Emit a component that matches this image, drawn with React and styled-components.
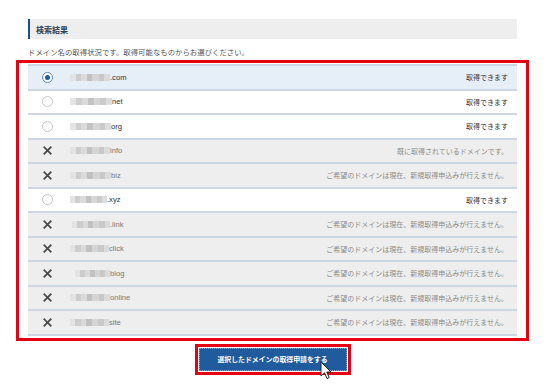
import React from "react";
import styled, { createGlobalStyle } from "styled-components";

const Global = createGlobalStyle`
  html, body { margin: 0; padding: 0; background: #fff; }
  body { font-family: "Noto Sans CJK JP", "Liberation Sans", sans-serif; }
`;

const Page = styled.div`
  width: 550px;
  height: 389px;
  padding: 19px 33px 0 28px;
  box-sizing: border-box;
  position: relative;
`;

const Heading = styled.div`
  height: 20px;
  background: #eeeeee;
  border-left: 2px solid #1d4f8c;
  display: flex;
  align-items: center;
  padding-left: 6px;
  font-size: 8px;
  font-weight: bold;
  color: #2c3e55;
`;

const Lead = styled.p`
  margin: 0;
  height: 21px;
  display: flex;
  align-items: center;
  padding-top: 4px;
  box-sizing: border-box;
  font-size: 7.4px;
  color: #555;
`;

const Highlight = styled.div`
  border: 3px solid #e50012;
  margin: 0 -12px;
  padding: 1px 9px 2px;
`;

const Table = styled.div`
  display: flex;
  flex-direction: column;
  border-top: 2px solid #cdd6e2;
`;

const bg = { selected: "#e6eef8", ok: "#ffffff", ng: "#eeeeee" };

const Row = styled.div`
  height: 22.5px;
  border-bottom: 2px solid #cdd6e2;
  background: ${(p) => bg[p.$state]};
  display: grid;
  grid-template-columns: 38px 1fr auto;
  align-items: center;
  padding-right: 9px;
`;

const IconCell = styled.div`
  display: flex;
  justify-content: center;
`;

const Radio = styled.span`
  width: 9px;
  height: 9px;
  border-radius: 50%;
  border: 1px solid ${(p) => (p.$checked ? "#5a86b8" : "#c3c8ce")};
  background: #fff;
  display: flex;
  align-items: center;
  justify-content: center;
  &::after {
    content: "";
    width: 5px;
    height: 5px;
    border-radius: 50%;
    background: ${(p) => (p.$checked ? "#1f5aa0" : "transparent")};
  }
`;

const Domain = styled.div`
  display: flex;
  align-items: center;
  font-family: "Liberation Sans", Arial, sans-serif;
  font-size: 7.6px;
  color: ${(p) => (p.$ng ? "#777" : "#333")};
  padding-left: 4px;
`;

const Masked = styled.span`
  display: inline-block;
  width: ${(p) => p.$w}px;
  height: 7px;
  margin-left: ${(p) => p.$o}px;
  background: linear-gradient(
    90deg,
    #e2e2e2 0 14%,
    #c9c9c9 14% 28%,
    #d8d8d8 28% 42%,
    #bdbdbd 42% 56%,
    #d2d2d2 56% 72%,
    #c6c6c6 72% 86%,
    #dadada 86% 100%
  );
  filter: blur(0.6px);
  opacity: 0.9;
`;

const Status = styled.div`
  font-size: 7px;
  color: ${(p) => (p.$ng ? "#8a8a8a" : "#333")};
  text-align: right;
`;

const Footer = styled.div`
  display: flex;
  justify-content: center;
  padding-top: 3px;
`;

const ButtonFrame = styled.div`
  border: 3px solid #e50012;
  padding: 1px;
  position: relative;
`;

const Button = styled.button`
  width: 148px;
  height: 23px;
  background: #1f5b9d;
  border: 1px dotted #7ea4d0;
  color: #fff;
  font-family: "Noto Sans CJK JP", sans-serif;
  font-weight: bold;
  font-size: 6.9px;
  display: block;
  padding: 0;
  cursor: pointer;
`;

const Cursor = styled.svg`
  position: absolute;
  left: 122px;
  top: 14px;
  width: 12px;
  height: 19px;
`;

const rows = [
  { tld: ".com", state: "selected", w: 40, status: "取得できます" },
  { tld: "net", state: "ok", w: 42, status: "取得できます" },
  { tld: "org", state: "ok", w: 41, status: "取得できます" },
  { tld: "info", state: "ng", w: 40, status: "既に取得されているドメインです。" },
  { tld: "biz", state: "ng", w: 41, status: "ご希望のドメインは現在、新規取得申込みが行えません。" },
  { tld: ".xyz", state: "ok", w: 37, status: "取得できます" },
  { tld: ".link", state: "ng", w: 38, o: 2, status: "ご希望のドメインは現在、新規取得申込みが行えません。" },
  { tld: "click", state: "ng", w: 39, status: "ご希望のドメインは現在、新規取得申込みが行えません。" },
  { tld: "blog", state: "ng", w: 35, o: 5, status: "ご希望のドメインは現在、新規取得申込みが行えません。" },
  { tld: "online", state: "ng", w: 40, status: "ご希望のドメインは現在、新規取得申込みが行えません。" },
  { tld: "site", state: "ng", w: 39, status: "ご希望のドメインは現在、新規取得申込みが行えません。" },
];

const Cross = () => (
  <svg width="9" height="9" viewBox="0 0 10 10">
    <path d="M1.5 1.5 L8.5 8.5 M8.5 1.5 L1.5 8.5" stroke="#4a4a4a" strokeWidth="2" strokeLinecap="square" />
  </svg>
);

export default function App() {
  return (
    <>
      <Global />
      <Page>
        <Heading>検索結果</Heading>
        <Lead>ドメイン名の取得状況です。取得可能なものからお選びください。</Lead>
        <Highlight>
          <Table>
            {rows.map((r) => {
              const ng = r.state === "ng";
              return (
                <Row key={r.tld} $state={r.state}>
                  <IconCell>
                    {ng ? <Cross /> : <Radio $checked={r.state === "selected"} />}
                  </IconCell>
                  <Domain $ng={ng}>
                    <Masked $w={r.w} $o={r.o || 0} />
                    {r.tld}
                  </Domain>
                  <Status $ng={ng}>{r.status}</Status>
                </Row>
              );
            })}
          </Table>
        </Highlight>
        <Footer>
          <ButtonFrame>
            <Button type="button">選択したドメインの取得申請をする</Button>
            <Cursor viewBox="0 0 12 19">
              <path
                d="M1 1 L1 15 L4.5 11.8 L7 17.5 L9.2 16.6 L6.8 11 L11 11 Z"
                fill="#fff"
                stroke="#222"
                strokeWidth="1"
                strokeLinejoin="round"
              />
            </Cursor>
          </ButtonFrame>
        </Footer>
      </Page>
    </>
  );
}
